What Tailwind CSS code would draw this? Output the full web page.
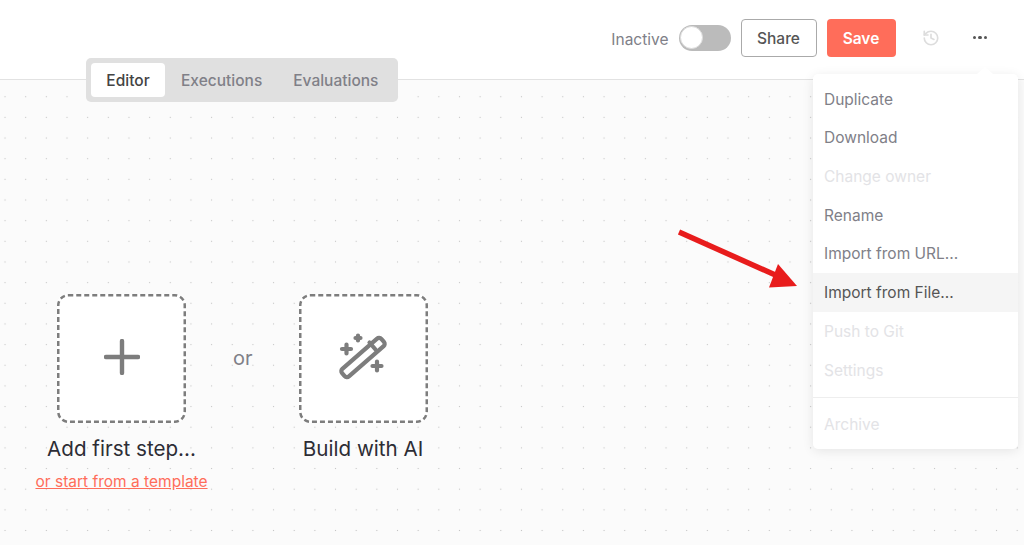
<!DOCTYPE html>
<html lang="en">
<head>
  <meta charset="UTF-8">
  <title>Workflow editor</title>
  <script src="https://cdn.jsdelivr.net/npm/@tailwindcss/browser@4"></script>
</head>
<body class="bg-white font-['Inter',sans-serif]">
  <div class="relative flex h-[545px] w-[1024px] flex-col overflow-hidden">
    <!-- Header -->
    <header class="flex h-[80px] shrink-0 items-center justify-end border-b border-[#e2e2e2] bg-white pb-[4px] pr-[37px]">
      <span class="mt-[4px] text-[15.500px] text-[#808088]">Inactive</span>
      <span class="ml-[10px] flex h-[26px] w-[52px] items-center rounded-full bg-[#bbbbbb] pl-[1px]">
        <span class="h-[23px] w-[23px] rounded-full border border-[#dddddd] bg-white"></span>
      </span>
      <button class="ml-[10px] h-[38px] w-[76px] rounded-[4px] border border-[#aaaaaa] bg-white pt-[2px] text-[15.500px] font-medium text-[#555555]">Share</button>
      <button class="ml-[10px] h-[38px] w-[69px] rounded-[4px] bg-[#ff6d5a] pt-[2px] text-[15.500px] font-semibold text-white">Save</button>
      <svg class="ml-[26px]" width="18" height="18" viewBox="0 0 24 24" fill="none" stroke="#dddddd" stroke-width="2.2" stroke-linecap="round" stroke-linejoin="round">
        <path d="M3 12a9 9 0 1 0 9-9 9.75 9.75 0 0 0-6.74 2.74L3 8"/>
        <path d="M3 3v5h5"/>
        <path d="M12 7v5l4 2"/>
      </svg>
      <span class="ml-[33px] flex gap-[2px]">
        <span class="h-[3.5px] w-[3.5px] rounded-full bg-[#555555]"></span>
        <span class="h-[3.5px] w-[3.5px] rounded-full bg-[#555555]"></span>
        <span class="h-[3.5px] w-[3.5px] rounded-full bg-[#555555]"></span>
      </span>
    </header>

    <!-- Canvas -->
    <main class="flex flex-1 items-start bg-[#fbfbfb] bg-[radial-gradient(circle,#c4c4c4_0.7px,transparent_1px)] bg-[size:20.67px_20.67px] bg-[position:-5.3px_6.4px] pl-[36px] pt-[214px]">
      <div class="flex w-[171px] flex-col items-center">
        <div class="relative flex h-[129px] w-[129px] items-center justify-center rounded-[10px] bg-white">
          <svg class="absolute inset-0" width="129" height="129" fill="none">
            <rect x="1.250" y="1.250" width="126.500" height="126.500" rx="10" stroke="#7d7d7d" stroke-width="2.500" stroke-dasharray="5 3"/>
          </svg>
          <svg class="mb-[4px]" width="36" height="36" viewBox="0 0 36 36" fill="none" stroke="#7d7d7d" stroke-width="4.400" stroke-linecap="round">
            <path d="M18 2v32M2 18h32"/>
          </svg>
        </div>
        <span class="mt-[12px] whitespace-nowrap text-[20.600px] leading-[28px] text-[#2d2d35]">Add first step...</span>
        <a href="#" class="mt-[9px] whitespace-nowrap text-[15.500px] leading-[20px] text-[#ff6d5a] underline">or start from a template</a>
      </div>
      <span class="ml-[26px] mt-[50px] text-[20px] leading-[28px] text-[#808088]">or</span>
      <div class="ml-[46px] flex w-[129px] flex-col items-center">
        <div class="relative flex h-[129px] w-[129px] items-center justify-center rounded-[10px] bg-white">
          <svg class="absolute inset-0" width="129" height="129" fill="none">
            <rect x="1.250" y="1.250" width="126.500" height="126.500" rx="10" stroke="#7d7d7d" stroke-width="2.500" stroke-dasharray="5 3"/>
          </svg>
          <svg class="mb-[4px] ml-[-1px]" width="48" height="48" viewBox="0 0 48 48" fill="none" stroke="#7d7d7d" stroke-width="4.200" stroke-linecap="round" stroke-linejoin="round">
            <rect x="-26" y="-5" width="52" height="10" rx="3" transform="translate(24 24.5) rotate(-41)"/>
            <path d="M30.500 9.500l6 7"/>
            <path d="M3 16h9M7.500 11.500v9"/>
            <path d="M16.500 5h5M19 2.500v5"/>
            <path d="M33.500 33h9M38 28.500v9"/>
          </svg>
        </div>
        <span class="mt-[12px] whitespace-nowrap text-[20.600px] leading-[28px] text-[#2d2d35]">Build with AI</span>
      </div>
    </main>

    <!-- Tabs -->
    <nav class="absolute left-[86px] top-[58px] flex h-[44px] w-[312px] items-center rounded-[5px] bg-[#e0e0e0] pl-[5px] pt-[1px] text-[15.500px] font-medium text-[#808088]">
      <span class="mb-[1px] flex h-[34px] w-[74px] items-center justify-center rounded-[4px] bg-white pt-[2px] text-[#444444]">Editor</span>
      <span class="ml-[16px]">Executions</span>
      <span class="ml-[31px]">Evaluations</span>
    </nav>

    <!-- Menu -->
    <div class="absolute left-[813px] top-[74px] w-[205px] rounded-[5px] bg-white pb-[5px] pt-[6px] text-[15.500px] text-[#808088] shadow-[0_2px_12px_rgba(0,0,0,0.09)]">
      <span class="absolute -top-[7px] left-[164px] h-0 w-0 border-x-[8px] border-b-[7px] border-x-transparent border-b-white"></span>
      <div class="flex h-[38.7px] items-center px-[11px]">Duplicate</div>
      <div class="flex h-[38.7px] items-center px-[11px]">Download</div>
      <div class="flex h-[38.7px] items-center px-[11px] text-[#e3e3e6]">Change owner</div>
      <div class="flex h-[38.7px] items-center px-[11px]">Rename</div>
      <div class="flex h-[38.7px] items-center px-[11px]">Import from URL...</div>
      <div class="flex h-[38.7px] items-center bg-[#f5f5f5] px-[11px] text-[#555555]">Import from File...</div>
      <div class="flex h-[38.7px] items-center px-[11px] text-[#e3e3e6]">Push to Git</div>
      <div class="flex h-[38.7px] items-center px-[11px] text-[#e3e3e6]">Settings</div>
      <div class="mt-[7px] border-t border-[#eeeeee] pt-[8px]">
        <div class="flex h-[38.7px] items-center px-[11px] text-[#e3e3e6]">Archive</div>
      </div>
    </div>

    <!-- Annotation arrow -->
    <svg class="absolute left-[670px] top-[220px]" width="140" height="80" viewBox="0 0 140 80" fill="none">
      <path d="M9 12L112 58" stroke="#e81c1c" stroke-width="5.500"/>
      <path d="M108 44L99 67.500L127 66Z" fill="#e81c1c"/>
    </svg>
  </div>
</body>
</html>
